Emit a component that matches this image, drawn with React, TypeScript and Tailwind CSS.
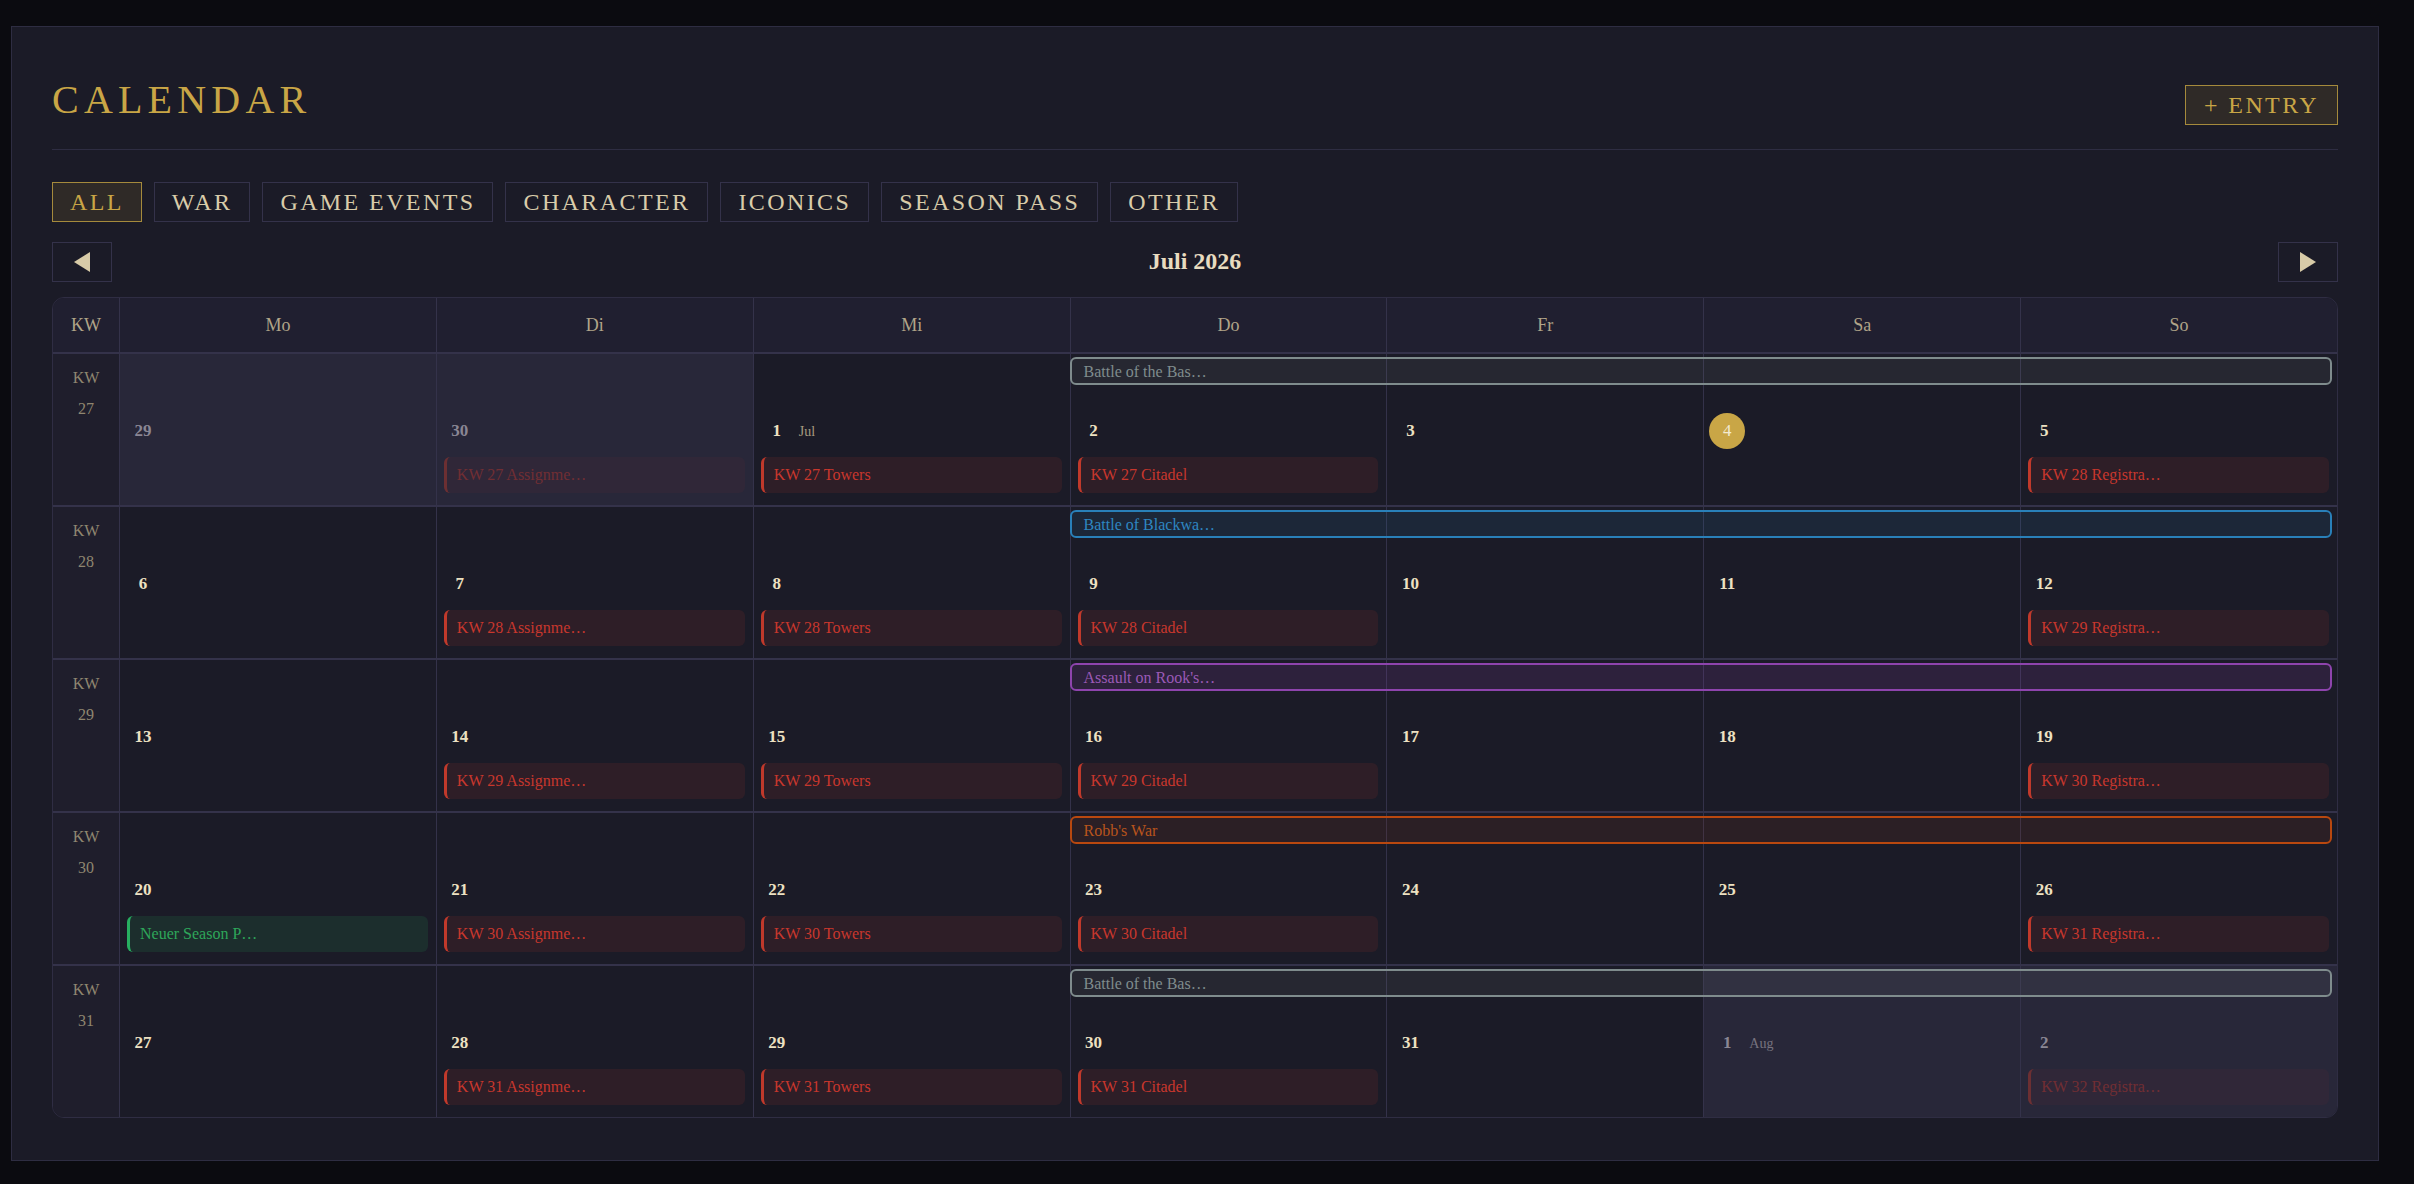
import React from "react";

type Chip = { text: string; kind: "red" | "green"; faded?: boolean };
type Day = { n: number; out?: boolean; today?: boolean; month?: string; chip?: Chip };
type BannerKind = "grey" | "blue" | "purple" | "orange";
type Week = { kw: number; banner: { text: string; kind: BannerKind }; days: Day[] };

const weeks: Week[] = [
  {
    kw: 27,
    banner: { text: "Battle of the Bas…", kind: "grey" },
    days: [
      { n: 29, out: true },
      { n: 30, out: true, chip: { text: "KW 27 Assignme…", kind: "red", faded: true } },
      { n: 1, month: "Jul", chip: { text: "KW 27 Towers", kind: "red" } },
      { n: 2, chip: { text: "KW 27 Citadel", kind: "red" } },
      { n: 3 },
      { n: 4, today: true },
      { n: 5, chip: { text: "KW 28 Registra…", kind: "red" } },
    ],
  },
  {
    kw: 28,
    banner: { text: "Battle of Blackwa…", kind: "blue" },
    days: [
      { n: 6 },
      { n: 7, chip: { text: "KW 28 Assignme…", kind: "red" } },
      { n: 8, chip: { text: "KW 28 Towers", kind: "red" } },
      { n: 9, chip: { text: "KW 28 Citadel", kind: "red" } },
      { n: 10 },
      { n: 11 },
      { n: 12, chip: { text: "KW 29 Registra…", kind: "red" } },
    ],
  },
  {
    kw: 29,
    banner: { text: "Assault on Rook's…", kind: "purple" },
    days: [
      { n: 13 },
      { n: 14, chip: { text: "KW 29 Assignme…", kind: "red" } },
      { n: 15, chip: { text: "KW 29 Towers", kind: "red" } },
      { n: 16, chip: { text: "KW 29 Citadel", kind: "red" } },
      { n: 17 },
      { n: 18 },
      { n: 19, chip: { text: "KW 30 Registra…", kind: "red" } },
    ],
  },
  {
    kw: 30,
    banner: { text: "Robb's War", kind: "orange" },
    days: [
      { n: 20, chip: { text: "Neuer Season P…", kind: "green" } },
      { n: 21, chip: { text: "KW 30 Assignme…", kind: "red" } },
      { n: 22, chip: { text: "KW 30 Towers", kind: "red" } },
      { n: 23, chip: { text: "KW 30 Citadel", kind: "red" } },
      { n: 24 },
      { n: 25 },
      { n: 26, chip: { text: "KW 31 Registra…", kind: "red" } },
    ],
  },
  {
    kw: 31,
    banner: { text: "Battle of the Bas…", kind: "grey" },
    days: [
      { n: 27 },
      { n: 28, chip: { text: "KW 31 Assignme…", kind: "red" } },
      { n: 29, chip: { text: "KW 31 Towers", kind: "red" } },
      { n: 30, chip: { text: "KW 31 Citadel", kind: "red" } },
      { n: 31 },
      { n: 1, out: true, month: "Aug" },
      { n: 2, out: true, chip: { text: "KW 32 Registra…", kind: "red", faded: true } },
    ],
  },
];

const colCls = [
  "col-start-2",
  "col-start-3",
  "col-start-4",
  "col-start-5",
  "col-start-6",
  "col-start-7",
  "col-start-8",
];

const bannerCls: Record<BannerKind, string> = {
  grey: "border-[#7f8c8d] bg-[rgba(127,140,141,0.11)] text-[#7f8c8d]",
  blue: "border-[#2980b9] bg-[rgba(41,128,185,0.12)] text-[#2e86c1]",
  purple: "border-[#8e44ad] bg-[rgba(142,68,173,0.16)] text-[#9b59b6]",
  orange: "border-[#b9480f] bg-[rgba(185,72,15,0.1)] text-[#b9541c]",
};

const tabs = ["ALL", "WAR", "GAME EVENTS", "CHARACTER", "ICONICS", "SEASON PASS", "OTHER"];
const dayNames = ["Mo", "Di", "Mi", "Do", "Fr", "Sa", "So"];

function ChipView({ chip }: { chip: Chip }) {
  const c =
    chip.kind === "red"
      ? "border-[#c0392b] bg-[rgba(192,57,43,0.12)] text-[#c8372d]"
      : "border-[#27ae60] bg-[rgba(39,174,96,0.13)] text-[#2ea65a]";
  return (
    <div
      className={`mt-[8px] ml-[7px] mr-[8px] h-[36px] rounded-[6px] border-l-[3px] flex items-center pl-[10px] text-[16px] whitespace-nowrap overflow-hidden ${c} ${
        chip.faded ? "opacity-45" : ""
      }`}
    >
      {chip.text}
    </div>
  );
}

function DayCell({ d, i }: { d: Day; i: number }) {
  return (
    <div
      className={`${colCls[i]} row-start-1 border-l border-[#34324a] flex flex-col pt-[59px] min-w-0 ${
        d.out ? "bg-[#282739]" : ""
      }`}
    >
      <div className="flex items-center h-[36px] ml-[5px]">
        <div
          className={`w-[36px] h-[36px] rounded-full flex items-center justify-center text-[17px] ${
            d.today
              ? "bg-[#c9a646] text-[#f3ead0]"
              : d.out
              ? "text-[#8a8694] font-semibold"
              : "text-[#ede1c2] font-bold"
          }`}
        >
          {d.n}
        </div>
        {d.month && (
          <span className={`ml-[4px] text-[14px] ${d.out ? "text-[#77737f]" : "text-[#a89c80]"}`}>
            {d.month}
          </span>
        )}
      </div>
      {d.chip && <ChipView chip={d.chip} />}
    </div>
  );
}

function WeekRow({ w }: { w: Week }) {
  return (
    <div className="grid grid-cols-[66px_repeat(7,minmax(0,1fr))] h-[153px] border-t-2 border-[#34324a]">
      <div className="row-start-1 col-start-1 bg-[#1f1e2c] text-center text-[16px] leading-[31px] pt-[8px] text-[#8f8670]">
        <div>KW</div>
        <div>{w.kw}</div>
      </div>
      {w.days.map((d, i) => (
        <DayCell key={i} d={d} i={i} />
      ))}
      <div
        className={`row-start-1 col-start-5 col-end-9 self-start mt-[3px] mr-[5px] h-[28px] rounded-[6px] border-[2.5px] flex items-center pl-[12px] pt-[2px] text-[16px] whitespace-nowrap ${
          bannerCls[w.banner.kind]
        }`}
      >
        {w.banner.text}
      </div>
    </div>
  );
}

function Tri({ dir }: { dir: "l" | "r" }) {
  return (
    <svg width="16" height="20" viewBox="0 0 16 20">
      {dir === "l" ? (
        <polygon points="16,0 16,20 0,10" fill="#d8cba8" />
      ) : (
        <polygon points="0,0 0,20 16,10" fill="#d8cba8" />
      )}
    </svg>
  );
}

export default function App() {
  return (
    <div className="min-h-[1184px] w-full bg-[#0b0b10] pt-[26px] pl-[11px] pb-[23px] font-[family-name:'Liberation_Serif','DejaVu_Serif',serif]">
      <div className="w-[2368px] border border-[#2e2d42] bg-[#1b1b27] px-[40px] pt-[53px] pb-[42px]">
        {/* header */}
        <div className="flex justify-between items-start border-b border-[#2e2d42] pb-[24px]">
          <div className="text-[40px] leading-[40px] tracking-[0.13em] text-[#c9a646]">CALENDAR</div>
          <button className="mt-[5px] h-[40px] px-[18px] border border-[#a58a3c] bg-[#2f2a27] text-[#c9a646] text-[24px] tracking-[0.1em] leading-none flex items-center">
            + ENTRY
          </button>
        </div>

        {/* tabs */}
        <div className="flex gap-[12px] mt-[32px]">
          {tabs.map((t, i) => (
            <button
              key={t}
              className={`h-[40px] px-[17px] border text-[24px] tracking-[0.1em] leading-none flex items-center ${
                i === 0
                  ? "border-[#a58a3c] bg-[#2f2a27] text-[#c9a646]"
                  : "border-[#34324a] text-[#d9ccaa]"
              }`}
            >
              {t}
            </button>
          ))}
        </div>

        {/* nav */}
        <div className="flex items-center justify-between mt-[20px]">
          <button className="w-[60px] h-[40px] border border-[#34324a] flex items-center justify-center">
            <Tri dir="l" />
          </button>
          <div className="text-[24px] font-bold text-[#e8dcc0] -mt-[2px]">Juli 2026</div>
          <button className="w-[60px] h-[40px] border border-[#34324a] flex items-center justify-center">
            <Tri dir="r" />
          </button>
        </div>

        {/* grid */}
        <div className="mt-[15px] border border-[#2f2d43] rounded-[12px] overflow-hidden">
          <div className="grid grid-cols-[66px_repeat(7,minmax(0,1fr))] h-[54px] bg-[#201f30] text-[18px] text-[#b0a488]">
            <div className="flex items-center justify-center">KW</div>
            {dayNames.map((n) => (
              <div key={n} className="flex items-center justify-center border-l border-[#34324a]">
                {n}
              </div>
            ))}
          </div>
          {weeks.map((w) => (
            <WeekRow key={w.kw} w={w} />
          ))}
        </div>
      </div>
    </div>
  );
}
